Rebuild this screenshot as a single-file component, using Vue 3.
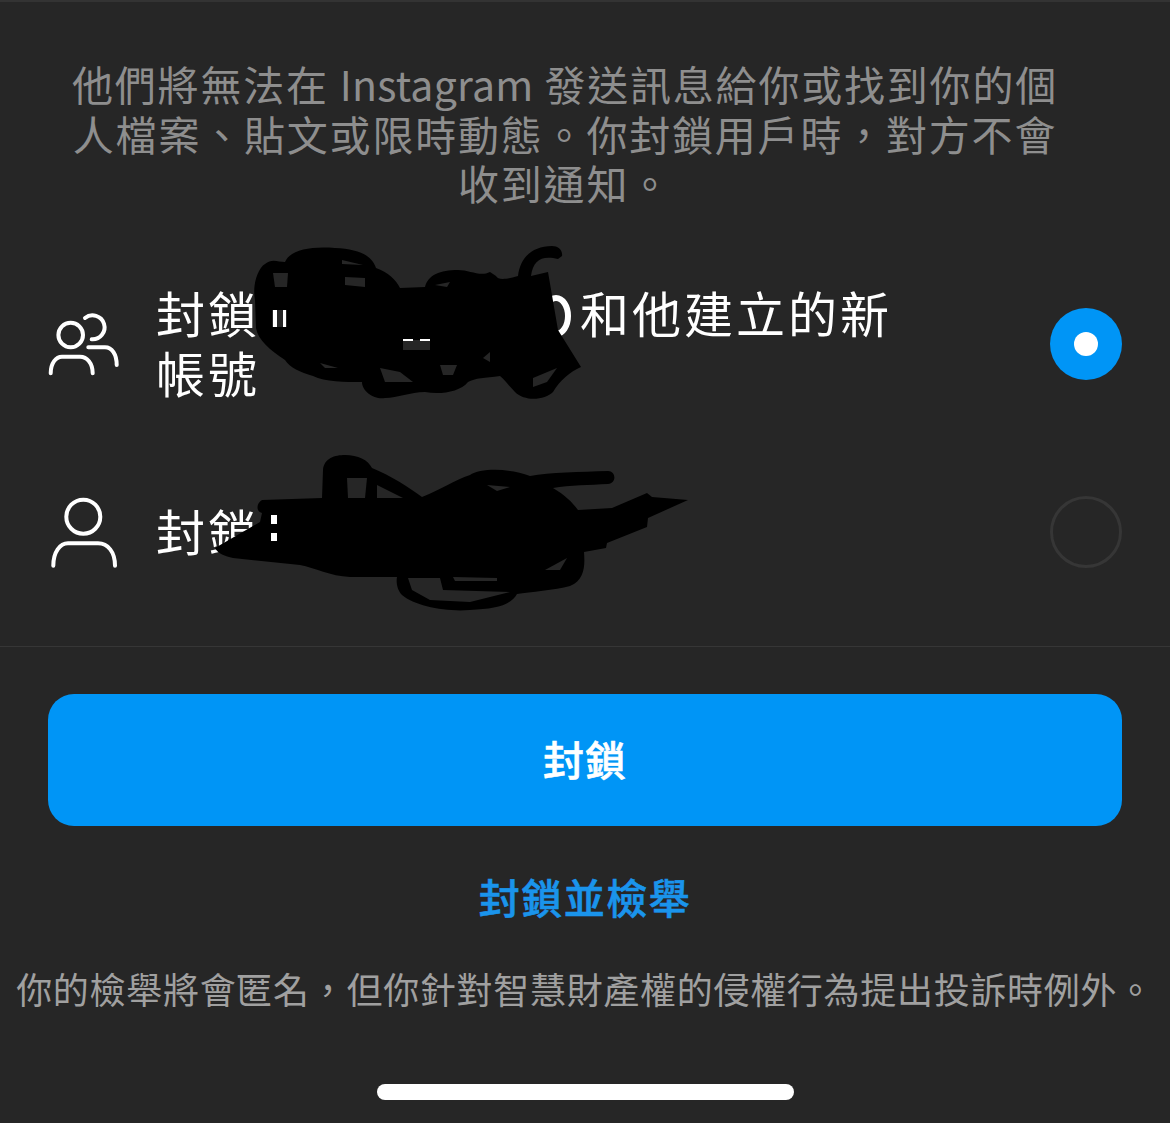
<script setup>
const blockRows = [
  { id: 'all', selected: true },
  { id: 'one', selected: false },
]

const holes = [
  'M273 273L288 273L287 287L275 287Z', 'M345 277L365 278L365 287L345 285Z', 'M342 260L363 265L342 264Z',
  'M435 285L450 282L447 287Z', 'M483 358L490 352L490 362Z', 'M533 378L557 368L547 382L533 387Z',
  'M380 368L400 372L413 382L385 382Z', 'M320 363L338 368L325 368Z', 'M440 365L457 365L453 375L443 375Z',
  'M403 340L430 340L430 350L403 350Z', 'M272 310L287 310L287 327L272 327Z',
  'M347 478L367 478L365 498L348 498Z', 'M377 485L403 498L377 498Z',
  'M408 578L440 578L443 590L510 592L470 602L430 600L412 590Z', 'M453 577L497 578L497 581L455 581Z',
  'M545 570L567 558L560 570Z', 'M487 485L510 487L497 491Z',
]
</script>

<template>
  <div class="screen">
    <p class="intro">他們將無法在 <span class="latin">Instagram</span> 發送訊息給你或找到你的個人檔案、貼文或限時動態。你封鎖用戶時&#xFF0C;對方不會收到通知。</p>

    <div class="options">
      <div class="row row-tall">
        <svg class="icon" viewBox="0 0 72 72" fill="none" stroke="#fff" stroke-width="4" stroke-linecap="round">
          <circle cx="22.7" cy="27" r="12.3" />
          <path d="M37 10A12 12 0 1 1 43.7 31.3" />
          <path d="M2.7 65.3C2.7 55 8 48.7 14 48.7H32C39 48.7 44.7 55 44.7 65.3" />
          <path d="M40.3 39.3H57C64 39.3 68.7 46 68.7 57" />
        </svg>
        <div class="label">封鎖<span class="hidden-name"></span>和他建立的新帳號</div>
        <span class="radio" :class="{ on: blockRows[0].selected }"></span>
      </div>
      <div class="row">
        <svg class="icon" viewBox="0 0 72 72" fill="none" stroke="#fff" stroke-width="4" stroke-linecap="round">
          <circle cx="35.3" cy="20.7" r="17" />
          <path d="M5.3 69.7C5.3 56 12 47.3 20 47.3H50C60 47.3 67 56 67 69.7" />
        </svg>
        <div class="label">封鎖</div>
        <span class="radio" :class="{ on: blockRows[1].selected }"></span>
      </div>
    </div>

    <div class="actions">
      <button class="primary">封鎖</button>
      <div class="link">封鎖並檢舉</div>
      <p class="note">你的檢舉將會匿名&#xFF0C;但你針對智慧財產權的侵權行為提出投訴時例外。</p>
      <div class="home-bar"></div>
    </div>

    <svg class="scribble" viewBox="0 0 1170 1123" aria-hidden="true">
      <ellipse cx="556" cy="316" rx="12" ry="18" fill="none" stroke="#fff" stroke-width="6" />
      <path fill="#000" d="M255 300C252 285 258 268 265 264C272 258 278 262 285 262C290 250 310 246 335 248C358 249 372 255 376 268
        C388 272 396 280 400 288L425 287C428 275 440 270 458 270C470 270 480 277 490 272L496 276C498 280 505 280 518 276
        C520 258 532 246 552 246C558 246 563 250 562 256L558 259C542 255 533 260 531 276L548 272L558 330L581 367
        C570 372 560 380 553 392C545 400 525 402 515 392C508 385 505 380 500 376C485 378 475 378 468 382
        C460 392 440 395 425 392C410 392 398 398 385 398C375 400 362 392 362 382C345 382 325 382 313 376
        C300 372 290 368 285 360C270 350 258 340 256 328Z" />
      <path fill="#000" d="M215 548L260 522L262 513C256 512 256 503 262 500L322 498L323 470C324 458 335 455 345 455
        C358 455 368 460 372 468C390 475 410 488 422 497C440 490 455 480 470 475C480 468 510 468 530 476
        C550 472 580 472 608 471C616 471 617 483 608 484C590 485 570 485 553 488C565 495 572 502 578 510
        L612 508L647 493L652 497L688 500L648 518L647 527L607 543L606 548L584 552C585 565 585 580 570 586
        C555 590 530 592 517 594C510 606 495 609 470 610C445 612 415 606 402 595C397 590 396 582 397 577
        L350 577C330 576 315 568 300 565L233 558C225 556 218 554 215 548Z" />
      <path v-for="d in holes" :key="d" :d="d" fill="#262626" />
      <rect x="273" y="310" width="4" height="17" fill="#fff" />
      <rect x="283" y="310" width="3" height="17" fill="#fff" />
      <rect x="403" y="339" width="10" height="2" fill="#fff" />
      <rect x="420" y="339" width="10" height="2" fill="#fff" />
      <rect x="271" y="515" width="6" height="9" fill="#fff" />
      <rect x="271" y="533" width="6" height="8" fill="#fff" />
    </svg>
  </div>
</template>

<style scoped>
.screen {
  position: relative;
  box-sizing: border-box;
  width: 1170px;
  height: 1123px;
  overflow: hidden;
  border-top: 2px solid #333;
  background: #262626;
  color: #fff;
  font-family: "Noto Sans CJK TC", "Noto Sans", sans-serif;
}
.intro {
  margin: 57px 0 0;
  padding: 0 105px 0 65px;
  color: #8e8e8e;
  font-size: 41px;
  font-weight: 400;
  letter-spacing: 1.8px;
  line-height: 49.5px;
  text-align: center;
}
.latin {
  letter-spacing: 0.2px;
}
.options {
  display: flex;
  flex-direction: column;
  gap: 92px;
  padding: 76.5px 48px 78px;
  border-bottom: 1px solid #363636;
}
.row {
  display: flex;
  align-items: center;
}
.icon {
  flex: none;
  width: 72px;
  height: 72px;
  margin-right: 36px;
}
.label {
  flex: none;
  width: 770px;
  font-size: 49px;
  font-weight: 400;
  letter-spacing: 3px;
  line-height: 60px;
  transform: translateY(-2px);
}
.hidden-name {
  display: inline-block;
  width: 320px;
}
.radio {
  box-sizing: border-box;
  flex: none;
  width: 72px;
  height: 72px;
  margin-left: auto;
  border: 3px solid #363636;
  border-radius: 50%;
}
.radio.on {
  position: relative;
  border: 0;
  background: #0095f6;
}
.radio.on::after {
  content: "";
  position: absolute;
  top: 24px;
  left: 24px;
  width: 24px;
  height: 24px;
  border-radius: 50%;
  background: #fff;
}
.actions {
  display: flex;
  flex-direction: column;
  align-items: center;
  padding-top: 47px;
}
.primary {
  width: 1074px;
  height: 132px;
  padding: 0 0 4px;
  border: 0;
  border-radius: 26px;
  background: #0095f6;
  color: #fff;
  font: 500 41px "Noto Sans CJK TC", sans-serif;
  letter-spacing: 1px;
  -webkit-text-stroke: 0.6px #fff;
}
.link {
  margin-top: 40px;
  color: #1a94ec;
  font-size: 41px;
  font-weight: 500;
  letter-spacing: 1.5px;
  line-height: 60px;
  -webkit-text-stroke: 0.6px #1a94ec;
}
.note {
  margin: 37px 0 0;
  color: #a0a0a0;
  font-size: 36px;
  font-weight: 400;
  letter-spacing: 0.7px;
  line-height: 50px;
  white-space: nowrap;
}
.home-bar {
  width: 417px;
  height: 16px;
  margin-top: 71px;
  border-radius: 8px;
  background: #fff;
}
.scribble {
  position: absolute;
  top: -2px;
  left: 0;
  width: 1170px;
  height: 1123px;
  pointer-events: none;
}
</style>
